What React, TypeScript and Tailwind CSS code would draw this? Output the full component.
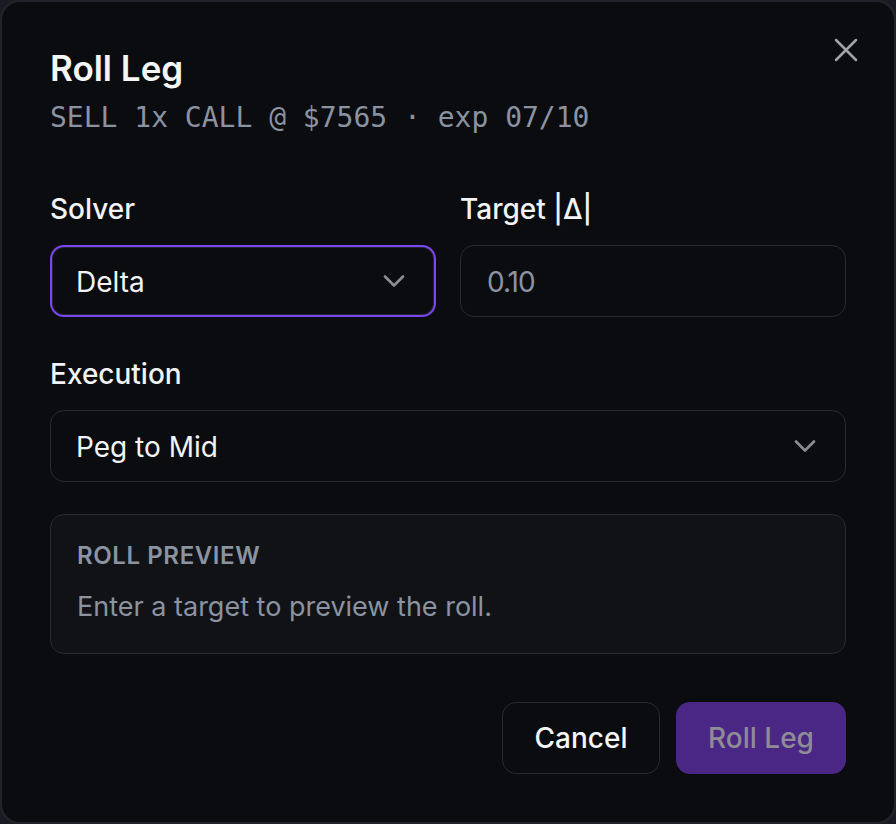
import { ChevronDown, X } from 'lucide-react';

const sans = { fontFamily: 'Inter, "Noto Sans", sans-serif' };

function SelectBox({ value, focused }: { value: string; focused?: boolean }) {
  return (
    <button
      className={`flex h-[72px] w-full items-center justify-between rounded-[14px] bg-[#0b0c0f] pr-[22px] text-left text-[28px] text-[#f2f3f5] ${
        focused
          ? 'border-2 border-[#7b46ef] pl-[24px] shadow-[inset_0_0_0_1px_#25262d]'
          : 'border border-[#2a2b32] pl-[25px]'
      }`}
    >
      <span className="pt-[2px]">{value}</span>
      <ChevronDown size={36} strokeWidth={1.8} className="text-[#8c8c8e]" />
    </button>
  );
}

export default function App() {
  return (
    <div className="h-[824px] w-[896px] bg-[#1b1c23]" style={sans}>
      <div className="relative flex h-full w-full flex-col rounded-[20px] border-2 border-[#23242b] bg-[#0b0c0f] px-[48px] pt-[44px]">
        <button className="absolute right-[28px] top-[28px] text-[#a3a3a6]">
          <X size={40} strokeWidth={1.5} />
        </button>

        <h2 className="text-[35px] font-semibold leading-[44px] text-[#f4f5f7]">Roll Leg</h2>
        <p
          className="mt-[10px] text-[28px] leading-[36px] text-[#8a93a2]"
          style={{ fontFamily: '"DejaVu Sans Mono", "Liberation Mono", monospace' }}
        >
          SELL 1x CALL @ $7565 · exp 07/10
        </p>

        <div className="mt-[56px] grid grid-cols-2 gap-[24px]">
          <div className="flex flex-col gap-[19px]">
            <label className="text-[28px] font-medium leading-[34px] text-[#f2f3f5]">Solver</label>
            <SelectBox value="Delta" focused />
          </div>
          <div className="flex flex-col gap-[19px]">
            <label className="text-[28px] font-medium leading-[34px] text-[#f2f3f5]">Target |Δ|</label>
            <div className="flex h-[72px] items-center rounded-[14px] border border-[#2a2b32] bg-[#0b0c0f] px-[26px] pt-[2px] text-[28px] tracking-[-1px] text-[#8a93a2]">
              0.10
            </div>
          </div>
        </div>

        <div className="mt-[40px] flex flex-col gap-[19px]">
          <label className="text-[28px] font-medium leading-[34px] text-[#f2f3f5]">Execution</label>
          <SelectBox value="Peg to Mid" />
        </div>

        <div className="mt-[32px] flex h-[140px] flex-col rounded-[14px] border border-[#2a2b32] bg-[#111215] px-[26px] pt-[26px]">
          <div className="text-[24px] font-semibold uppercase leading-[30px] tracking-[0.6px] text-[#8a93a2]">Roll Preview</div>
          <div className="mt-[19px] text-[27px] leading-[34px] text-[#8a93a2]">Enter a target to preview the roll.</div>
        </div>

        <div className="mt-[48px] flex justify-end gap-[16px]">
          <button className="h-[72px] w-[158px] rounded-[14px] border border-[#2a2b32] bg-[#0b0c0f] text-[28px] font-medium text-[#f4f5f7]">
            Cancel
          </button>
          <button className="h-[72px] w-[170px] rounded-[14px] bg-[#4a2785] text-[28px] font-medium text-[#8e8c94]">
            Roll Leg
          </button>
        </div>
      </div>
    </div>
  );
}
